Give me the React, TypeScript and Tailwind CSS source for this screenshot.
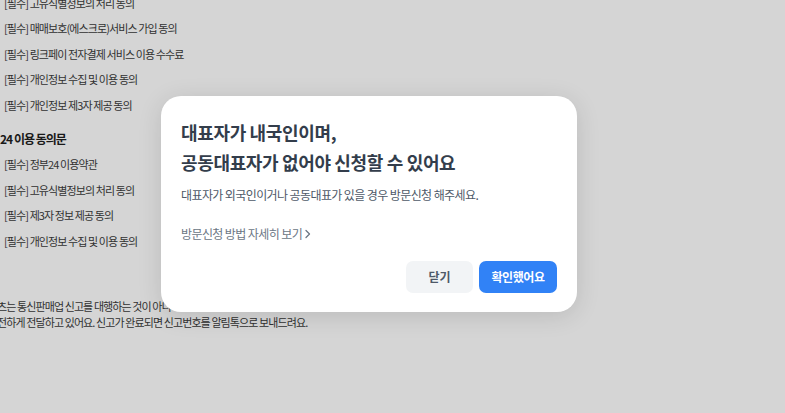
import React from "react";

const font = { fontFamily: '"Noto Sans CJK KR", "Noto Sans", sans-serif' };

const topItems = [
  "[필수] 고유식별정보의 처리 동의",
  "[필수] 매매보호(에스크로)서비스 가입 동의",
  "[필수] 링크페이 전자결제 서비스 이용 수수료",
  "[필수] 개인정보 수집 및 이용 동의",
  "[필수] 개인정보 제3자 제공 동의",
];

const govItems = [
  "[필수] 정부24 이용약관",
  "[필수] 고유식별정보의 처리 동의",
  "[필수] 제3자 정보 제공 동의",
  "[필수] 개인정보 수집 및 이용 동의",
];

function AgreementRow({ label }: { label: string }) {
  return <div className="h-[25.5px] flex items-center pl-[4px] text-[11px] tracking-[-0.9px] text-[#3b3b3b]">{label}</div>;
}

export default function App() {
  return (
    <div className="relative w-[785px] h-[413px] overflow-hidden bg-white" style={font}>
      {/* page underneath */}
      <div className="-mt-[10px]">
        {topItems.map((t) => (
          <AgreementRow key={t} label={t} />
        ))}
        <div className="mt-[9px] h-[25px] flex items-center text-[12px] font-bold tracking-[-1px] text-[#1e1e1e]">24 이용 동의문</div>
        {govItems.map((t) => (
          <AgreementRow key={t + "g"} label={t} />
        ))}
        <div className="mt-[44px] -ml-[3px] text-[11px] leading-[16px] tracking-[-0.9px] text-[#3b3b3b]">
          <div>츠는 통신판매업 신고를 대행하는 것이 아니</div>
          <div>전하게 전달하고 있어요. 신고가 완료되면 신고번호를 알림톡으로 보내드려요.</div>
        </div>
      </div>

      {/* dim overlay */}
      <div className="absolute inset-0 bg-[#000]/[0.165]">
        <div className="absolute left-[161px] top-[96px] w-[416px] h-[216px] rounded-[20px] bg-white shadow-[0_4px_24px_rgba(0,0,0,0.12)] px-[20px] pt-[21px] pb-[19px] flex flex-col">
          <h2 className="text-[18px] leading-[30px] font-bold tracking-[-0.35px] text-[#333d4b]">
            대표자가 내국인이며,
            <br />
            공동대표자가 없어야 신청할 수 있어요
          </h2>
          <p className="mt-[9px] text-[12px] leading-[18px] tracking-[-0.6px] text-[#4e5968]">
            대표자가 외국인이거나 공동대표가 있을 경우 방문신청 해주세요.
          </p>
          <button className="mt-[21px] self-start flex items-center gap-[2px] text-[12px] leading-[18px] tracking-[-0.6px] text-[#6b7684]">
            방문신청 방법 자세히 보기
            <svg width="8" height="10" viewBox="0 0 8 10" fill="none">
              <path d="M2 1.5 L5.5 5 L2 8.5" stroke="#6b7684" strokeWidth="1.3" strokeLinecap="round" strokeLinejoin="round" />
            </svg>
          </button>
          <div className="mt-auto flex justify-end gap-[6px]">
            <button className="w-[67px] h-[32px] rounded-[7px] bg-[#f2f4f6] text-[12px] font-semibold text-[#4e5968]">닫기</button>
            <button className="w-[78px] h-[32px] rounded-[7px] bg-[#3182f6] text-[12px] font-semibold tracking-[-0.4px] text-white">확인했어요</button>
          </div>
        </div>
      </div>
    </div>
  );
}
